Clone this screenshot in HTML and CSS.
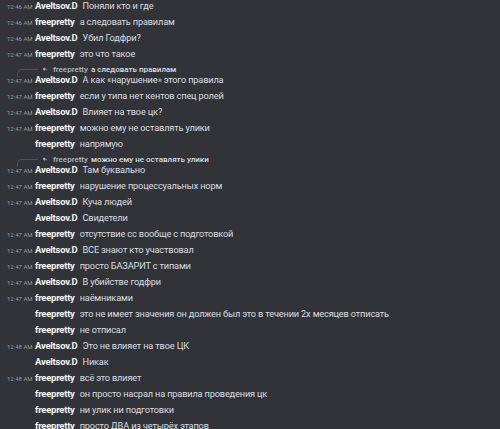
FILE: index.html
```html
<!DOCTYPE html>
<html lang="ru">
<head>
    <meta charset="UTF-8">
    <meta name="viewport" content="width=device-width, initial-scale=1.0">
    <title>#цк-обсуждение</title>
    <link rel="stylesheet" href="styles.css">
</head>
<body>
    <div class="chat">
        <div class="msg"><span class="time">12:46 AM</span><span class="author">Aveltsov.D</span><span class="text">Поняли кто и где</span></div>
        <div class="msg"><span class="time">12:46 AM</span><span class="author">freepretty</span><span class="text">а следовать правилам</span></div>
        <div class="msg"><span class="time">12:46 AM</span><span class="author">Aveltsov.D</span><span class="text">Убил Годфри?</span></div>
        <div class="msg"><span class="time">12:47 AM</span><span class="author">freepretty</span><span class="text">это что такое</span></div>
        <div class="reply">
            <span class="spine"></span>
            <svg class="reply-icon" viewBox="0 0 16 16" width="6" height="6"><path d="M7 3 2 8l5 5V9.6c3.4 0 5.6 1 7 3.4-.6-3.6-2.6-6.6-7-7.2V3z" fill="#b5bac1"/></svg>
            <span class="reply-author">freepretty</span>
            <span class="reply-text">а следовать правилам</span>
        </div>
        <div class="msg"><span class="time">12:47 AM</span><span class="author">Aveltsov.D</span><span class="text">А как «нарушение» этого правила</span></div>
        <div class="msg"><span class="time">12:47 AM</span><span class="author">freepretty</span><span class="text">если у типа нет кентов спец ролей</span></div>
        <div class="msg"><span class="time">12:47 AM</span><span class="author">Aveltsov.D</span><span class="text">Влияет на твое цк?</span></div>
        <div class="msg"><span class="time">12:47 AM</span><span class="author">freepretty</span><span class="text">можно ему не оставлять улики</span></div>
        <div class="msg"><span class="time"></span><span class="author">freepretty</span><span class="text">напрямую</span></div>
        <div class="reply">
            <span class="spine"></span>
            <svg class="reply-icon" viewBox="0 0 16 16" width="6" height="6"><path d="M7 3 2 8l5 5V9.6c3.4 0 5.6 1 7 3.4-.6-3.6-2.6-6.6-7-7.2V3z" fill="#b5bac1"/></svg>
            <span class="reply-author">freepretty</span>
            <span class="reply-text">можно ему не оставлять улики</span>
        </div>
        <div class="msg"><span class="time">12:47 AM</span><span class="author">Aveltsov.D</span><span class="text">Там буквально</span></div>
        <div class="msg"><span class="time">12:47 AM</span><span class="author">freepretty</span><span class="text">нарушение процессуальных норм</span></div>
        <div class="msg"><span class="time">12:47 AM</span><span class="author">Aveltsov.D</span><span class="text">Куча людей</span></div>
        <div class="msg"><span class="time"></span><span class="author">Aveltsov.D</span><span class="text">Свидетели</span></div>
        <div class="msg"><span class="time">12:47 AM</span><span class="author">freepretty</span><span class="text">отсутствие сс вообще с подготовкой</span></div>
        <div class="msg"><span class="time">12:47 AM</span><span class="author">Aveltsov.D</span><span class="text">ВСЕ знают кто участвовал</span></div>
        <div class="msg"><span class="time">12:47 AM</span><span class="author">freepretty</span><span class="text">просто БАЗАРИТ с типами</span></div>
        <div class="msg"><span class="time">12:47 AM</span><span class="author">Aveltsov.D</span><span class="text">В убийстве годфри</span></div>
        <div class="msg"><span class="time">12:47 AM</span><span class="author">freepretty</span><span class="text">наёмниками</span></div>
        <div class="msg"><span class="time"></span><span class="author">freepretty</span><span class="text">это не имеет значения он должен был это в течении 2х месяцев отписать</span></div>
        <div class="msg"><span class="time"></span><span class="author">freepretty</span><span class="text">не отписал</span></div>
        <div class="msg"><span class="time">12:48 AM</span><span class="author">Aveltsov.D</span><span class="text">Это не влияет на твое ЦК</span></div>
        <div class="msg"><span class="time"></span><span class="author">Aveltsov.D</span><span class="text">Никак</span></div>
        <div class="msg"><span class="time">12:48 AM</span><span class="author">freepretty</span><span class="text">всё это влияет</span></div>
        <div class="msg"><span class="time"></span><span class="author">freepretty</span><span class="text">он просто насрал на правила проведения цк</span></div>
        <div class="msg"><span class="time"></span><span class="author">freepretty</span><span class="text">ни улик ни подготовки</span></div>
        <div class="msg"><span class="time"></span><span class="author">freepretty</span><span class="text">просто ДВА из четырёх этапов</span></div>
    </div>
</body>
</html>
```

FILE: styles.css
```css
body {
    margin: 0;
    background-color: #313338;
    font-family: Roboto, "Noto Sans", sans-serif;
    color: #dbdee1;
    overflow: hidden;
}
.chat {
    margin-top: -2px;
}
.msg {
    display: flex;
    align-items: baseline;
    height: 16px;
    line-height: 16px;
    white-space: nowrap;
}
.time {
    flex: none;
    box-sizing: border-box;
    width: 35px;
    padding-left: 7px;
    font-size: 6px;
    color: #949ba4;
}
.author {
    font-size: 9.5px;
    font-weight: 700;
    letter-spacing: -0.25px;
    color: #f2f3f5;
    margin-right: 5px;
}
.text {
    font-size: 9.2px;
    letter-spacing: -0.15px;
    color: #dbdee1;
}
.reply {
    display: flex;
    align-items: center;
    height: 10px;
    padding-top: 2px;
    margin-bottom: -2px;
    white-space: nowrap;
}
.spine {
    align-self: flex-end;
    width: 20px;
    height: 7px;
    margin-left: 17px;
    margin-bottom: -3px;
    border-top: 1px solid #4e5058;
    border-left: 1px solid #4e5058;
    border-top-left-radius: 5px;
}
.reply-icon {
    margin-left: 4px;
    margin-right: 5px;
}
.reply-author {
    font-size: 8px;
    font-weight: 500;
    color: #b5bac1;
    margin-right: 3px;
}
.reply-text {
    font-size: 8px;
    font-weight: 500;
    color: #dbdee1;
}
```
